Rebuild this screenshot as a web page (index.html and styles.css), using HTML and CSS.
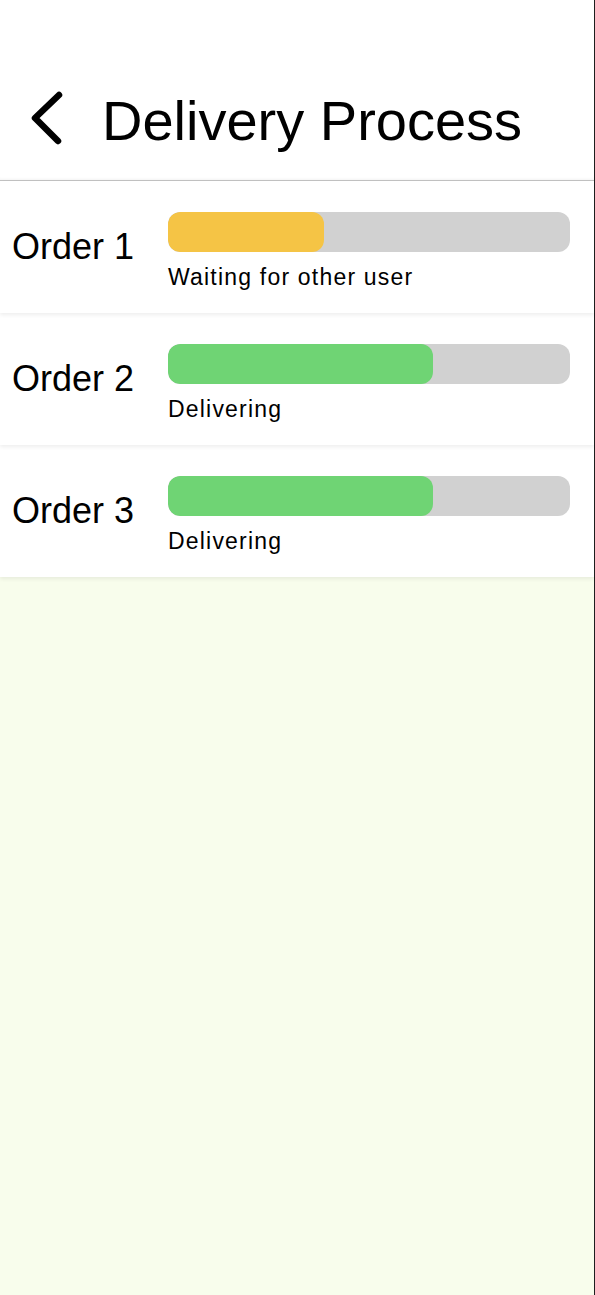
FILE: index.html
```html
<!DOCTYPE html>
<html lang="en">
<head>
<meta charset="utf-8">
<title>Delivery Process</title>
<link rel="stylesheet" href="styles.css">
</head>
<body>
<div class="page">
  <header class="header">
    <svg class="back" width="40" height="56" viewBox="0 0 40 56" aria-hidden="true">
      <polyline points="33,6 9,29 32,52" fill="none" stroke="#000" stroke-width="6.5" stroke-linecap="round" stroke-linejoin="round"/>
    </svg>
    <h1 class="title">Delivery Process</h1>
  </header>
  <main class="orders">
    <section class="card card-1">
      <div class="label">Order 1</div>
      <div class="progress">
        <div class="track"><div class="fill fill-wait" style="width:38.8%"></div></div>
        <div class="status">Waiting for other user</div>
      </div>
    </section>
    <section class="card card-2">
      <div class="label">Order 2</div>
      <div class="progress">
        <div class="track"><div class="fill fill-go" style="width:66%"></div></div>
        <div class="status">Delivering</div>
      </div>
    </section>
    <section class="card card-3">
      <div class="label">Order 3</div>
      <div class="progress">
        <div class="track"><div class="fill fill-go" style="width:66%"></div></div>
        <div class="status">Delivering</div>
      </div>
    </section>
  </main>
</div>
</body>
</html>
```
FILE: styles.css
```css
* { box-sizing: border-box; }
html, body { margin: 0; padding: 0; }
body {
  font-family: "Liberation Sans", Arial, sans-serif;
  color: #000;
  background: #f8fdec;
}
.page {
  width: 595px;
  min-height: 1295px;
  border-right: 1px solid #1e1e1e;
  background: #f8fdec;
}
.header {
  height: 181px;
  background: #fff;
  display: flex;
  align-items: flex-start;
  padding: 89px 0 0 26px;
  border-bottom: 1px solid #c2c2c2;
  box-shadow: inset 0 -3px 3px -2px rgba(0,0,0,0.05);
}
.back { flex: none; display: block; }
.title {
  margin: 4px 0 0 36px;
  font-size: 56px;
  font-weight: 400;
  line-height: 56px;
}
.orders { display: flex; flex-direction: column; }
.card {
  height: 132px;
  background: #fff;
  display: flex;
  align-items: center;
  padding: 0 24px 0 12px;
  box-shadow: 0 2px 4px rgba(0,0,0,0.07);
  position: relative;
}
.card-1 { z-index: 3; }
.card-2 { z-index: 2; }
.card-3 { z-index: 1; }
.label {
  width: 156px;
  flex: none;
  font-size: 36px;
  line-height: 42px;
}
.progress {
  flex: 1;
  align-self: flex-start;
  margin-top: 31px;
}
.track {
  height: 40px;
  border-radius: 12px;
  background: #d1d1d1;
  overflow: hidden;
}
.fill { height: 100%; border-radius: 12px; }
.fill-wait { background: #f5c445; }
.fill-go { background: #6fd474; }
.status {
  margin-top: 12px;
  font-size: 23px;
  line-height: 26px;
  letter-spacing: 1.2px;
}
```
